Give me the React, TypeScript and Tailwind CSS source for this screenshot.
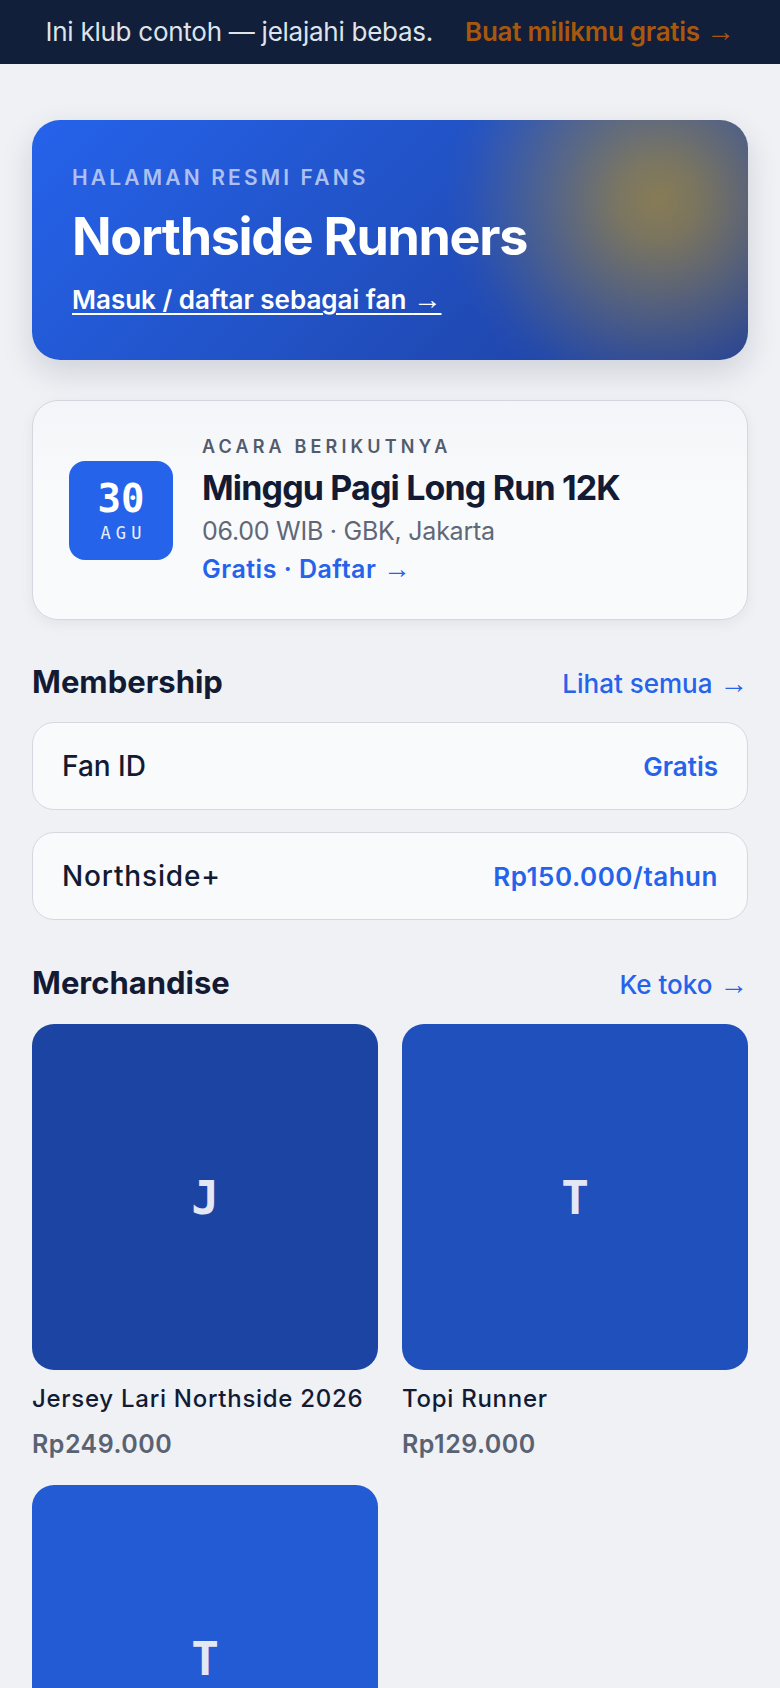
import React from "react";

const sans = { fontFamily: "Inter, 'Noto Sans', sans-serif" };

function Arrow() {
  return <span className="font-['Liberation_Sans',sans-serif] font-normal text-[1.1em] leading-[0]">→</span>;
}

function Product({ letter, name, price, color }: { letter: string; name?: string; price?: string; color: string }) {
  return (
    <div className="flex flex-col">
      <div className={`aspect-square rounded-[22px] flex items-center justify-center ${color}`}>
        <span className="text-[46px] leading-none font-bold text-[#e4e8f4] font-['DejaVu_Sans_Mono',monospace] pt-[2px]">{letter}</span>
      </div>
      {name && (
        <div className="mt-[17px] text-[24px] leading-none font-medium text-[#121b33] tracking-[0.03em]">{name}</div>
      )}
      {price && (
        <div className="mt-[21px] text-[25px] leading-none font-semibold text-[#5a6272] tracking-[0.02em]">{price}</div>
      )}
    </div>
  );
}

export default function App() {
  return (
    <div className="min-h-[1688px] bg-[#eff1f5]" style={sans}>
      <div className="h-16 bg-[#111f3b] flex items-center justify-center gap-[32px]">
        <span className="text-[26px] leading-none text-[#dfe3ea] tracking-[-0.01em]">Ini klub contoh — jelajahi bebas.</span>
        <span className="text-[26px] leading-none font-semibold text-[#a8580c] tracking-[-0.01em]">
          Buat milikmu gratis <Arrow />
        </span>
      </div>

      <div className="px-8 pt-14">
        <div className="rounded-[28px] pl-10 pt-[47px] pb-[47px] shadow-[0_12px_32px_rgba(15,23,42,0.14)] bg-[radial-gradient(circle_at_626px_80px,rgba(205,158,24,0.6)_0px,rgba(205,158,24,0.52)_40px,rgba(205,158,24,0.32)_100px,rgba(205,158,24,0.14)_155px,rgba(205,158,24,0.04)_190px,rgba(205,158,24,0)_215px),linear-gradient(135deg,#2563eb_0%,#1e3f9c_100%)]">
          <div className="text-[21px] leading-none font-semibold tracking-[0.15em] text-[#adc0f2]">HALAMAN RESMI FANS</div>
          <div className="mt-[23px] text-[52px] leading-none font-bold tracking-tight text-white">Northside Runners</div>
          <div className="mt-6 text-[26px] leading-none font-semibold text-white underline decoration-2 underline-offset-[4px]">
            Masuk / daftar sebagai fan <Arrow />
          </div>
        </div>

        <div className="mt-[40px] rounded-[26px] border-[1.5px] border-[#d3d7de] bg-[linear-gradient(180deg,#f3f5f8_0%,#f8fafc_40%,#f9fafb_100%)] shadow-[0_4px_14px_rgba(15,23,42,0.06)] pl-[36px] py-[37px] flex items-center gap-[29px]">
          <div className="w-[104px] h-[99px] rounded-2xl bg-[#2563eb] flex flex-col items-center justify-center gap-[7px] font-['DejaVu_Sans_Mono',monospace] text-white">
            <span className="text-[39px] leading-none font-bold">30</span>
            <span className="text-[17px] leading-none tracking-[0.3em] pl-[0.3em] text-white/90">AGU</span>
          </div>
          <div className="flex flex-col">
            <div className="text-[18px] leading-none font-semibold tracking-[0.23em] text-[#525b6c]">ACARA BERIKUTNYA</div>
            <div className="mt-[15px] text-[34px] leading-none font-bold tracking-tight text-[#121b33]">Minggu Pagi Long Run 12K</div>
            <div className="mt-[14px] text-[25px] leading-none text-[#5f6778] tracking-[-0.01em]">06.00 WIB · GBK, Jakarta</div>
            <div className="mt-[13px] text-[25px] leading-none font-semibold text-[#2563eb] tracking-[0.02em]">
              Gratis · Daftar <Arrow />
            </div>
          </div>
        </div>

        <div className="mt-[46px] flex items-baseline justify-between">
          <div className="text-[31px] leading-none font-bold text-[#121b33]">Membership</div>
          <div className="text-[26px] leading-none font-medium text-[#2563eb]">
            Lihat semua <Arrow />
          </div>
        </div>

        <div className="mt-[25px] flex flex-col gap-[22px]">
          <div className="h-[88px] rounded-[22px] border-[1.5px] border-[#d5d9df] bg-[#f9fafb] px-[29px] flex items-center justify-between">
            <span className="text-[28px] font-medium text-[#121b33]">Fan ID</span>
            <span className="text-[26px] font-semibold text-[#2563eb]">Gratis</span>
          </div>
          <div className="h-[88px] rounded-[22px] border-[1.5px] border-[#d5d9df] bg-[#f9fafb] px-[29px] flex items-center justify-between">
            <span className="text-[28px] font-medium text-[#121b33] tracking-[0.03em]">Northside+</span>
            <span className="text-[26px] font-semibold text-[#2563eb] tracking-[0.02em]">Rp150.000/tahun</span>
          </div>
        </div>

        <div className="mt-[47px] flex items-baseline justify-between">
          <div className="text-[31px] leading-none font-bold text-[#121b33]">Merchandise</div>
          <div className="text-[26px] leading-none font-medium text-[#2563eb]">
            Ke toko <Arrow />
          </div>
        </div>

        <div className="mt-[26px] grid grid-cols-2 gap-x-6 gap-y-[28px]">
          <Product letter="J" name="Jersey Lari Northside 2026" price="Rp249.000" color="bg-[#1c45a3]" />
          <Product letter="T" name="Topi Runner" price="Rp129.000" color="bg-[#2050bc]" />
          <Product letter="T" color="bg-[#225bd4]" />
        </div>
      </div>
    </div>
  );
}
